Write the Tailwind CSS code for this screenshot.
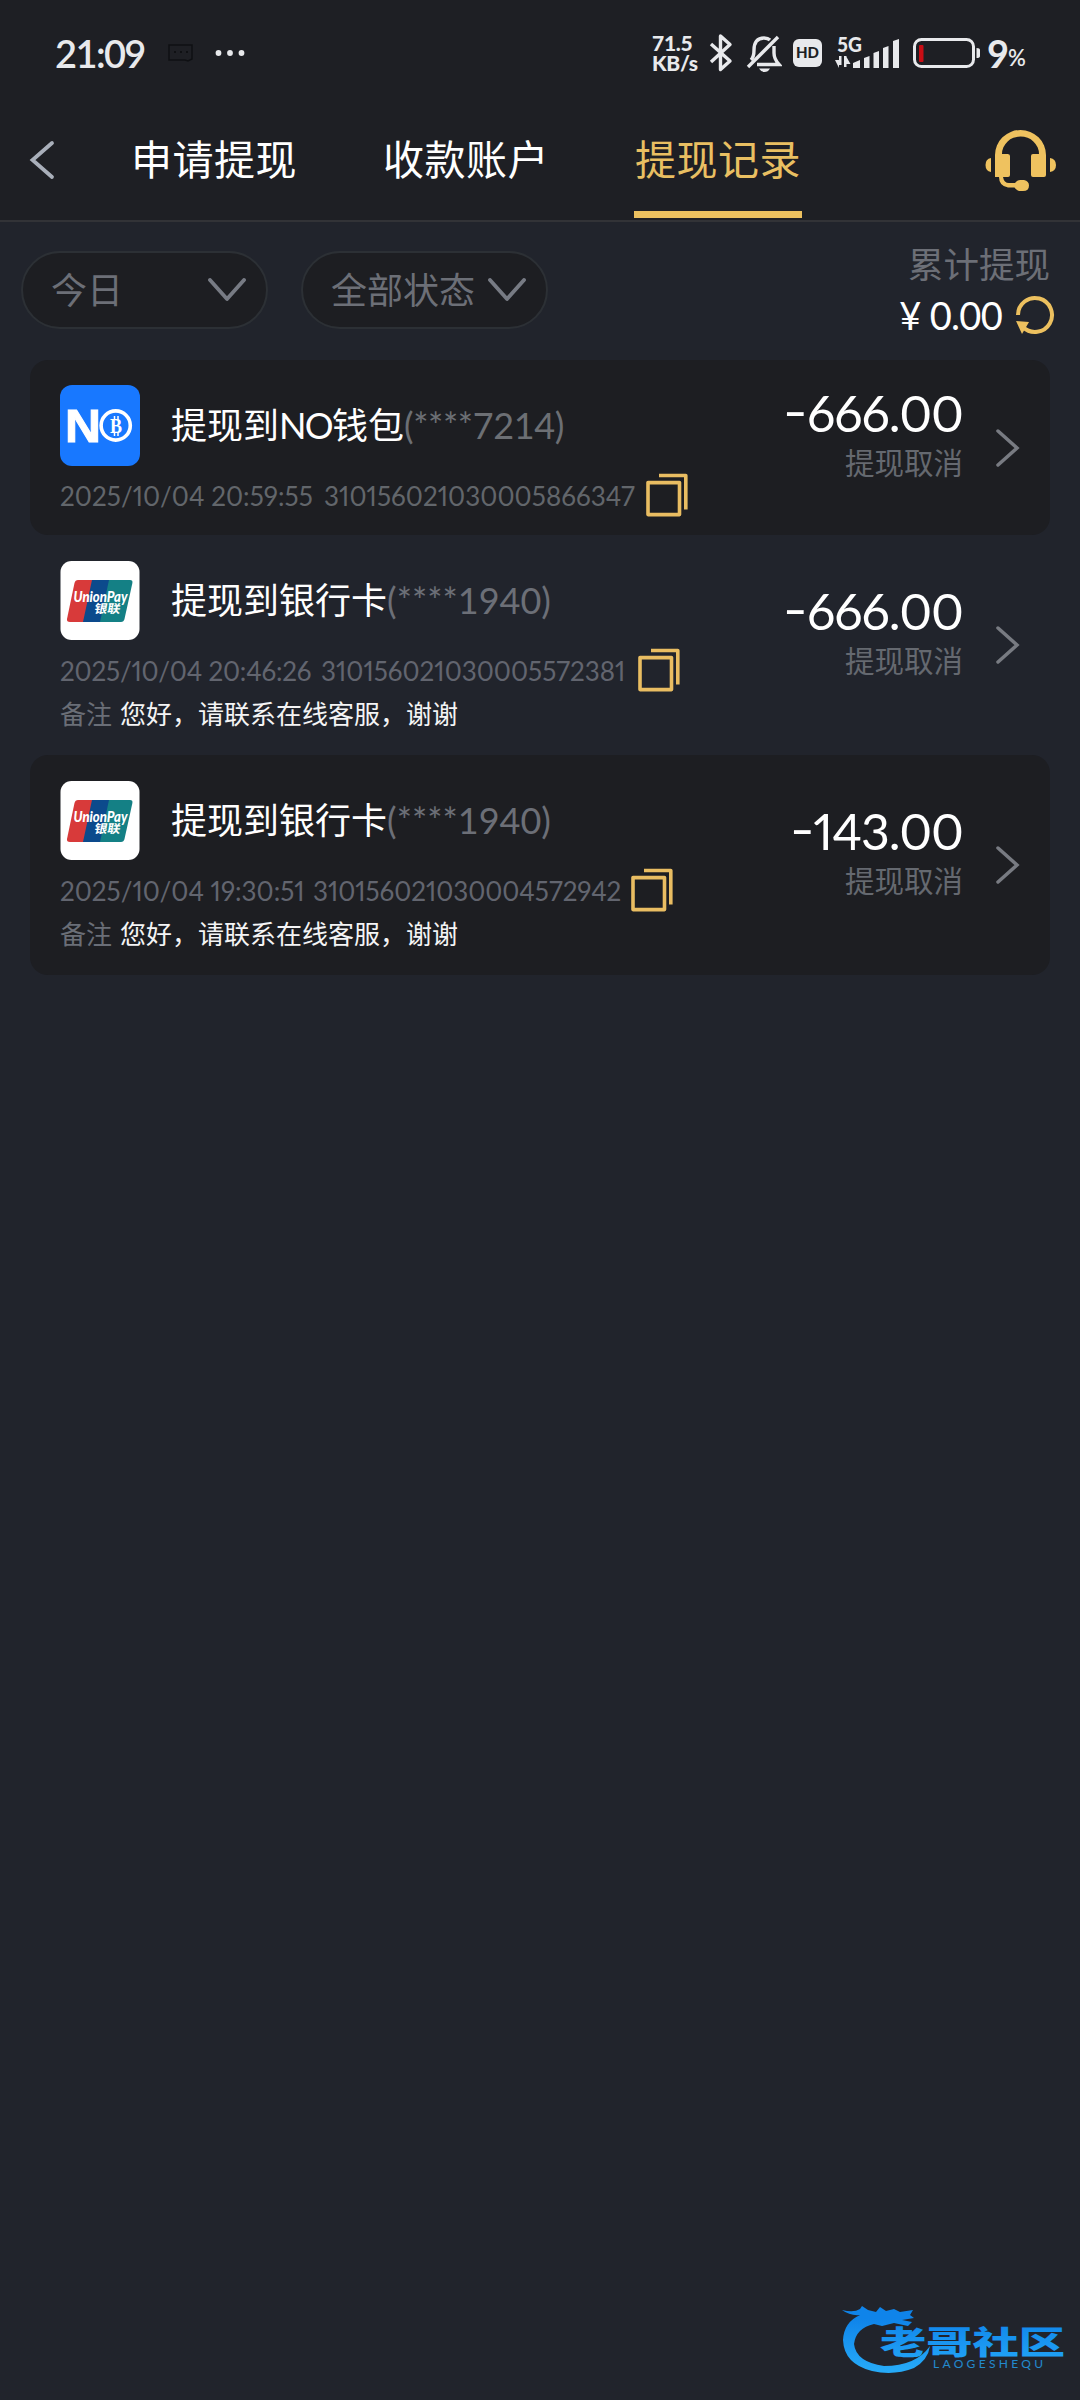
<!DOCTYPE html>
<html lang="zh-CN">
<head>
<meta charset="utf-8">
<title>提现记录</title>
<script src="https://cdn.jsdelivr.net/npm/@tailwindcss/browser@4"></script>
</head>
<body class="bg-[#21242c]">
<svg class="hidden">
  <defs>
    <symbol id="copy" viewBox="0 0 42 44"><g fill="none" stroke="#e9bd62" stroke-width="3.6" stroke-linejoin="round"><rect x="2" y="9.600" width="31.500" height="32"/><path d="M13 2.500H39.800V36.500"/></g></symbol>
    <symbol id="next" viewBox="0 0 24 38"><path d="M2 2L21 19L2 36" fill="none" stroke="#787b82" stroke-width="3.500" stroke-linecap="round"/></symbol>
    <symbol id="down" viewBox="0 0 38 24"><path d="M2 2L19 21L36 2" fill="none" stroke="#777b84" stroke-width="3.800" stroke-linecap="round" stroke-linejoin="round"/></symbol>
    <symbol id="union" viewBox="0 0 80 80">
      <rect x=".5" y="0" width="79" height="79" rx="11" fill="#fff"/>
      <path d="M18 19H36L26 61H10Q6.500 61 7 58L14.500 22Q15.300 19 18 19Z" fill="#d83a3a"/>
      <path d="M32 19H52L42 61H23Z" fill="#0c4a8c"/>
      <path d="M49 19H70Q73 19 72.400 22L64.500 58Q63.800 61 61 61H40Z" fill="#148085"/>
      <text x="13.500" y="41" font-family="Lato" font-size="15" font-weight="900" font-style="italic" fill="#fff" textLength="54" lengthAdjust="spacingAndGlyphs">UnionPay</text>
      <text x="34" y="52" font-family="Noto Sans CJK SC" font-size="12" font-weight="700" fill="#fff" textLength="26" lengthAdjust="spacingAndGlyphs" transform="translate(9 0) skewX(-10)">银联</text>
    </symbol>
  </defs>
</svg>
<div class="flex h-[2400px] w-[1080px] flex-col bg-[#21242c] font-[Lato,'Noto_Sans_CJK_SC',sans-serif] text-white">
  <header class="h-[222px] border-b-2 border-[#323337] bg-[#1e1f24]">
    <div class="flex h-[106px] items-center pl-[55px] text-[#e8e9ec]">
      <span class="w-[91px] text-[38px] leading-[40px] font-semibold tracking-[-1.6px] whitespace-nowrap">21:09</span>
      <svg class="ml-[22px]" width="26" height="20" viewBox="0 0 26 20"><path d="M1 2H24V16L20 18L17 17H1Z" fill="none" stroke="#0f1013" stroke-width="1.500"/><path d="M6 9h2M12 9h2M18 9h2" stroke="#0f1013" stroke-width="2"/></svg>
      <svg class="ml-[21px]" width="30" height="8" viewBox="0 0 30 8" fill="#e8e9ec"><circle cx="3.500" cy="4" r="2.900"/><circle cx="15" cy="4" r="2.900"/><circle cx="26.500" cy="4" r="2.900"/></svg>
      <div class="ml-[407px] w-[50px] text-[21px] leading-[20px] font-black tracking-[-0.3px]"><div>71.5</div><div>KB/s</div></div>
      <svg class="ml-[6px]" width="26" height="40" viewBox="0 0 26 40"><path d="M3 11L22 28L12.500 36.500V3L22 11.500L3 29" fill="none" stroke="#e8e9ec" stroke-width="3.400" stroke-linejoin="round"/></svg>
      <svg class="ml-[12px]" width="36" height="40" viewBox="0 0 36 40"><g fill="none" stroke="#e8e9ec" stroke-width="3.400"><path d="M2 34L32 4"/><path d="M5 27Q8 24 8 17Q8 5 18 5Q22 5 24 7"/><path d="M28 13V20Q28 26 33 31.500H11"/></g><path d="M13 35.500H24Q22 39 18.500 39Q15 39 13 35.500Z" fill="#e8e9ec"/></svg>
      <svg class="ml-[11px]" width="30" height="28" viewBox="0 0 30 28"><rect width="29" height="28" rx="6" fill="#e8e9ec"/><text x="3" y="19" font-family="Lato" font-weight="900" font-size="15" fill="#1e1f24" textLength="23">HD</text></svg>
      <svg class="ml-[12px] overflow-visible" width="65" height="34" viewBox="0 0 65 34" fill="#e8e9ec"><text x="2" y="15.500" font-family="Lato" font-weight="900" font-size="20" textLength="25" lengthAdjust="spacingAndGlyphs">5G</text><path d="M4 20v9H6.500V20ZM0 24L4 32V24ZM9 20V31H11.500V20ZM11.500 21L15.500 28H11.500Z"/><path d="M18 27L25 24V32H18ZM29 22L34.500 20V32H29ZM38.500 17L44 15V32H38.500ZM48 12L53.500 10V32H48ZM58 5L64 3V32H58Z"/></svg>
      <svg class="ml-[13px]" width="68" height="30" viewBox="0 0 68 30"><rect x="1.500" y="1.500" width="59" height="27" rx="7" fill="none" stroke="#e8e9ec" stroke-width="3"/><rect x="6" y="7" width="4.500" height="17" rx="1" fill="#c90d14"/><path d="M63.500 10Q67 10 67 12V18Q67 20 63.500 20Z" fill="#e8e9ec"/></svg>
      <span class="ml-[6px] text-[38px] leading-[40px] font-bold">9</span><span class="-ml-[1px] pt-[9px] text-[22px] leading-[30px] font-semibold">%</span>
    </div>
    <div class="flex h-[114px] items-start">
      <svg class="mt-[34px] ml-[29px]" width="26" height="40" viewBox="0 0 26 40"><path d="M23 3L3.500 20L23 37" fill="none" stroke="#a9afba" stroke-width="3.800" stroke-linecap="round"/></svg>
      <nav class="ml-[76px] flex gap-[84px] text-[41px] leading-[107px] tracking-[0.5px] whitespace-nowrap">
        <a class="h-[112px] w-[168px]">申请提现</a>
        <a class="h-[112px] w-[168px]">收款账户</a>
        <a class="-ml-px h-[112px] w-[168px] border-b-[7px] border-[#ecc05f] pl-px text-[#e9bf62]">提现记录</a>
      </nav>
      <svg class="mt-[24px] ml-[183px]" width="72" height="64" viewBox="0 0 72 64" fill="#efc25f"><path d="M10 47V25A25.500 25 0 0 1 61 25V45Q61 47 59 47H48Q46 47 46 45V26Q46 24 48 24H54A18.500 17.500 0 0 0 17 24H22.500Q25 24 25 26V45Q25 47 23 47H18Q19 53 24 53H30Q32 50 35 50H39Q44 51 44 55.500Q44 61 38 61H34Q31 60 29.500 57.500H23Q14 56 14 47Z"/><path d="M6 28V42Q0.500 41 0.500 35T6 28ZM65 28V42Q71 41 71 35T65 28Z"/></svg>
    </div>
  </header>

  <section class="flex h-[138px] items-start pl-[21px] text-[#6c6f77]">
    <div class="mt-[29px] flex h-[78px] w-[247px] items-center justify-between rounded-[39px] border-2 border-[#2c3035] bg-[#1d1e22] pr-[20px] pl-[28px] text-[36px] leading-[74px]"><span>今日</span><svg width="38" height="24"><use href="#down"/></svg></div>
    <div class="mt-[29px] ml-[33px] flex h-[78px] w-[247px] items-center justify-between rounded-[39px] border-2 border-[#2c3035] bg-[#1d1e22] pr-[20px] pl-[28px] text-[36px] leading-[74px]"><span>全部状态</span><svg width="38" height="24"><use href="#down"/></svg></div>
    <div class="mt-[20px] ml-auto flex flex-col items-end pr-[25px]">
      <div class="pr-[5px] text-[35.500px] leading-[46px]">累计提现</div>
      <div class="mt-[6px] flex items-center text-white">
        <span class="text-[38px] leading-[42px] tracking-[-0.7px] whitespace-nowrap">¥ 0.00</span>
        <svg class="ml-[13px]" width="40" height="40" viewBox="0 0 40 40"><path d="M3 20A17 17 0 1 1 8 32" fill="none" stroke="#ecc05f" stroke-width="4"/><path d="M1 26L14 27L7 39Z" fill="#ecc05f"/></svg>
      </div>
    </div>
  </section>

  <main class="flex flex-col px-[30px]">
    <article class="flex h-[175px] rounded-[18px] bg-[#1d1e22] pl-[30px]">
      <div class="flex-1">
        <div class="mt-[25px] flex h-[81px] items-center">
          <svg width="80" height="81" viewBox="0 0 80 81"><rect width="80" height="81" rx="12" fill="#1878ff"/><text x="5" y="57" font-family="Liberation Sans" font-weight="700" font-size="47" fill="#fff" stroke="#fff" textLength="36" lengthAdjust="spacingAndGlyphs">N</text><circle cx="55.700" cy="40.500" r="14.600" fill="none" stroke="#fff" stroke-width="3.600"/><text x="50" y="47.500" font-family="Liberation Serif" font-weight="700" font-size="20" fill="#fff" textLength="12" lengthAdjust="spacingAndGlyphs">B</text><path d="M54.500 31v4M58 31v4M54.500 47v4M58 47v4" stroke="#fff" stroke-width="1.500"/></svg>
          <h2 class="-mt-[2px] ml-[31px] text-[36px] leading-[50px] whitespace-nowrap"><span>提现到<span class="tracking-[-1.7px]">NO</span>钱包</span><span class="tracking-[-0.4px] text-[#6c6f74]">(****7214)</span></h2>
        </div>
        <div class="mt-[6px] flex h-[48px] items-center text-[26px] proportional-nums whitespace-nowrap text-[#62666b]"><span class="w-[264px] tracking-[0.05px]">2025/10/04 20:59:55</span><span class="w-[322px] tracking-[0.05px]">310156021030005866347</span><svg class="-mt-[2px]" width="42" height="44"><use href="#copy"/></svg></div>
      </div>
      <div class="flex flex-col items-end justify-center pb-[25px]"><div class="text-[50px] leading-[56px] tracking-[-1px] proportional-nums"><span class="inline-block origin-right -translate-y-[3px] scale-x-[1.350]">-</span>666.00</div><div class="text-[29.500px] leading-[44px] text-[#656970]">提现取消</div></div>
      <svg class="mr-[30px] ml-[33px] self-center" width="24" height="38"><use href="#next"/></svg>
    </article>

    <article class="flex h-[220px] pl-[30px]">
      <div class="flex-1">
        <div class="mt-[26px] flex h-[80px] items-center">
          <svg width="80" height="80"><use href="#union"/></svg>
          <h2 class="-mt-[2px] ml-[31px] text-[36px] leading-[50px] whitespace-nowrap">提现到银行卡<span class="text-[#6c6f77]">(****1940)</span></h2>
        </div>
        <div class="mt-[6px] flex h-[48px] items-center text-[26px] proportional-nums whitespace-nowrap text-[#62656f]"><span class="w-[261px] tracking-[-0.2px]">2025/10/04 20:46:26</span><span class="w-[317px]">310156021030005572381</span><svg class="-mt-[2px]" width="42" height="44"><use href="#copy"/></svg></div>
        <div class="-mt-px flex h-[40px] items-center gap-[8px] text-[26px] text-[#6a6e77]"><span>备注</span><span class="text-[#f4f4f5]">您好，请联系在线客服，谢谢</span></div>
      </div>
      <div class="flex flex-col items-end justify-center pb-[25px]"><div class="text-[50px] leading-[56px] tracking-[-1px] proportional-nums"><span class="inline-block origin-right -translate-y-[3px] scale-x-[1.350]">-</span>666.00</div><div class="text-[29.500px] leading-[44px] text-[#656970]">提现取消</div></div>
      <svg class="mr-[30px] ml-[33px] self-center" width="24" height="38"><use href="#next"/></svg>
    </article>

    <article class="flex h-[220px] rounded-[18px] bg-[#1d1e22] pl-[30px]">
      <div class="flex-1">
        <div class="mt-[26px] flex h-[80px] items-center">
          <svg width="80" height="80"><use href="#union"/></svg>
          <h2 class="-mt-[2px] ml-[31px] text-[36px] leading-[50px] whitespace-nowrap">提现到银行卡<span class="text-[#6c6f77]">(****1940)</span></h2>
        </div>
        <div class="mt-[6px] flex h-[48px] items-center text-[26px] proportional-nums whitespace-nowrap text-[#62656f]"><span class="w-[253px]">2025/10/04 19:30:51</span><span class="w-[318px] tracking-[-0.05px]">310156021030004572942</span><svg class="-mt-[2px]" width="42" height="44"><use href="#copy"/></svg></div>
        <div class="-mt-px flex h-[40px] items-center gap-[8px] text-[26px] text-[#6a6e77]"><span>备注</span><span class="text-[#f4f4f5]">您好，请联系在线客服，谢谢</span></div>
      </div>
      <div class="flex flex-col items-end justify-center pb-[25px]"><div class="text-[50px] leading-[56px] tracking-[-1px] proportional-nums"><span class="inline-block origin-right -translate-y-[3px] scale-x-[1.350]">-</span>143.00</div><div class="text-[29.500px] leading-[44px] text-[#656970]">提现取消</div></div>
      <svg class="mr-[30px] ml-[33px] self-center" width="24" height="38"><use href="#next"/></svg>
    </article>
  </main>

  <footer class="mt-auto flex justify-end pr-[14px] pb-[22px]">
    <svg width="224" height="74" viewBox="0 0 224 74">
      <defs><linearGradient id="g" x1="0" y1="0" x2="0" y2="74" gradientUnits="userSpaceOnUse"><stop offset=".2" stop-color="#0f84ea"/><stop offset=".9" stop-color="#26aaf8"/></linearGradient></defs>
      <g fill="url(#g)">
        <path d="M0 6Q12 9 18 5L20 2L26 6L34 8L38 3L44 7L52 5L58 8L71 6L68 11L72 14L60 16L70 18L66 22L52 19L40 22L32 20Q14 24 12 40Q14 58 42 62Q74 62 88 42Q86 56 72 64Q52 72 30 67Q2 60 1 36Q2 18 18 11Q8 12 0 6Z"/>
        <text x="38" y="50" font-family="Noto Sans CJK SC" font-weight="900" font-size="32" textLength="185" lengthAdjust="spacingAndGlyphs">老哥社区</text>
        <text x="91" y="63.500" font-family="Lato" font-size="12" textLength="110" opacity=".8">LAOGESHEQU</text>
      </g>
    </svg>
  </footer>
</div>
</body>
</html>
